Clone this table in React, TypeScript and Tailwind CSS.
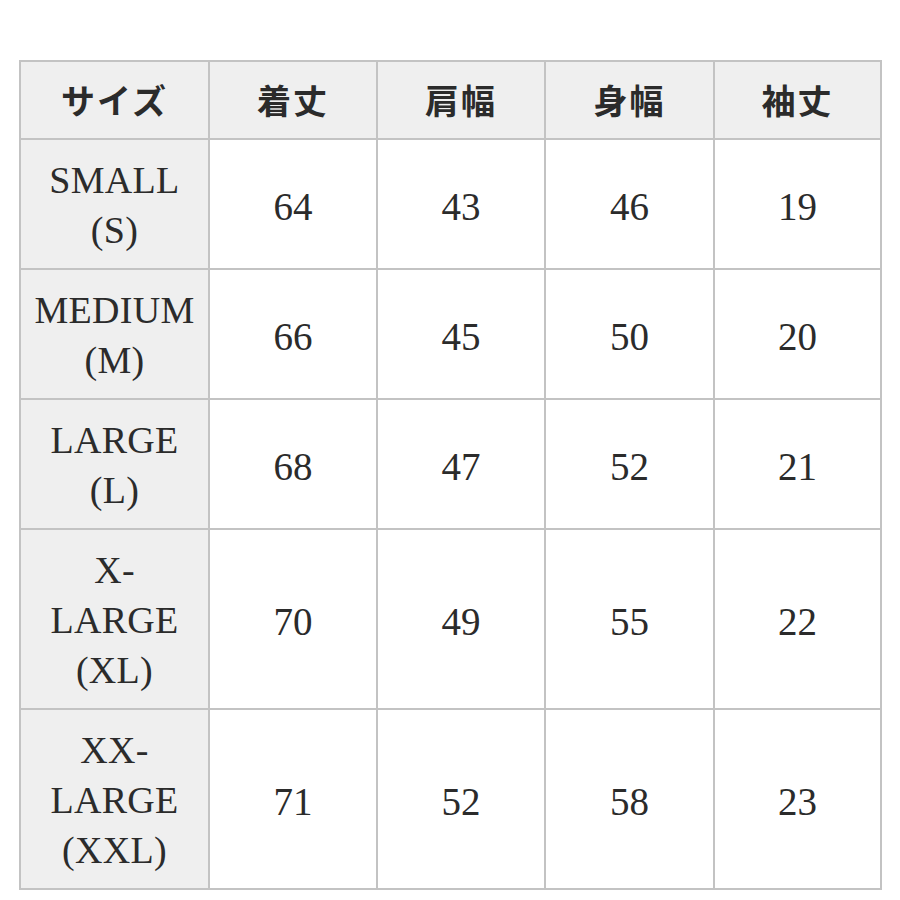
import React from "react";

const rows: { label: string[]; vals: string[] }[] = [
  { label: ["SMALL", "(S)"], vals: ["64", "43", "46", "19"] },
  { label: ["MEDIUM", "(M)"], vals: ["66", "45", "50", "20"] },
  { label: ["LARGE", "(L)"], vals: ["68", "47", "52", "21"] },
  { label: ["X-", "LARGE", "(XL)"], vals: ["70", "49", "55", "22"] },
  { label: ["XX-", "LARGE", "(XXL)"], vals: ["71", "52", "58", "23"] },
];

const headers = ["サイズ", "着丈", "肩幅", "身幅", "袖丈"];

export default function App() {
  return (
    <div className="min-h-[900px] w-[900px] bg-white pt-[60px] pl-[19px]">
      <table
        className="table-fixed border-collapse w-[861px] text-[#2b2b2b]"
        style={{ fontFamily: '"Liberation Serif", "Times New Roman", serif' }}
      >
        <colgroup>
          <col className="w-[189px]" />
          <col className="w-[168px]" />
          <col className="w-[168px]" />
          <col className="w-[169px]" />
          <col className="w-[167px]" />
        </colgroup>
        <thead>
          <tr>
            {headers.map((h) => (
              <th
                key={h}
                className="border-2 border-[#c3c3c3] bg-[#efefef] py-[13px] px-0 text-center text-[34px] font-bold leading-[50px] tracking-[2px]"
                style={{ fontFamily: '"Noto Sans CJK JP", "Noto Sans", sans-serif' }}
              >
                {h}
              </th>
            ))}
          </tr>
        </thead>
        <tbody>
          {rows.map((r) => (
            <tr key={r.label.join("")}>
              <td className="border-2 border-[#c3c3c3] bg-[#efefef] pt-[15px] pb-[13px] px-0 text-center text-[38px] leading-[50px] tracking-[0.3px]">
                {r.label.map((l, i) => (
                  <div key={i}>{l}</div>
                ))}
              </td>
              {r.vals.map((v, i) => (
                <td
                  key={i}
                  className="border-2 border-[#c3c3c3] bg-white pt-[5px] px-0 text-center text-[39px] leading-[50px]"
                >
                  {v}
                </td>
              ))}
            </tr>
          ))}
        </tbody>
      </table>
    </div>
  );
}
